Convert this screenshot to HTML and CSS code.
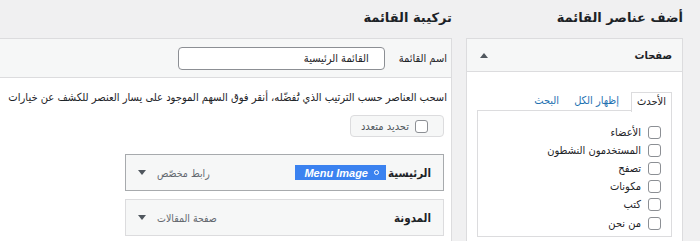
FILE: index.html
```html
<!DOCTYPE html>
<html lang="ar" dir="rtl">
<head>
  <meta charset="UTF-8">
  <title>القوائم</title>
  <link rel="stylesheet" href="styles.css">
</head>
<body>

<div class="wrap">
  <div class="col-side">
    <h2 class="col-title">أضف عناصر القائمة</h2>
    <div class="side-box">
      <div class="side-head">
        <span class="side-name">صفحات</span>
        <span class="arrow-up"></span>
      </div>
      <div class="side-body">
        <ul class="tabs">
          <li class="tab active">الأحدث</li>
          <li class="tab"><a href="#">إظهار الكل</a></li>
          <li class="tab"><a href="#">البحث</a></li>
        </ul>
        <div class="tab-panel">
          <label class="check-row"><span class="check"></span>الأعضاء</label>
          <label class="check-row"><span class="check"></span>المستخدمون النشطون</label>
          <label class="check-row"><span class="check"></span>تصفح</label>
          <label class="check-row"><span class="check"></span>مكونات</label>
          <label class="check-row"><span class="check"></span>كتب</label>
          <label class="check-row"><span class="check"></span>من نحن</label>
        </div>
      </div>
    </div>
  </div>

  <div class="col-main">
    <h2 class="col-title">تركيبة القائمة</h2>
    <div class="main-box">
      <div class="main-head">
        <label class="name-label" for="menu-name">اسم القائمة</label>
        <input id="menu-name" class="name-input" type="text" value="القائمة الرئيسية">
      </div>
      <div class="main-body">
        <p class="hint">اسحب العناصر حسب الترتيب الذي تُفضّله، أنقر فوق السهم الموجود على يسار العنصر للكشف عن خيارات</p>
        <label class="bulk-btn"><span class="check"></span>تحديد متعدد</label>

        <div class="menu-item hovered">
          <span class="item-title">الرئيسية</span>
          <span class="badge"><span class="gear"></span>Menu Image</span>
          <span class="item-type">رابط مخصّص</span>
          <span class="arrow-down"></span>
        </div>
        <div class="menu-item">
          <span class="item-title">المدونة</span>
          <span class="item-type">صفحة المقالات</span>
          <span class="arrow-down"></span>
        </div>
      </div>
    </div>
  </div>
</div>

</body>
</html>
```

FILE: styles.css
```css
html, body {
  margin: 0;
  overflow: hidden;
}
body {
  font-family: "DejaVu Sans Condensed", "DejaVu Sans", sans-serif;
  font-stretch: condensed;
  font-size: 11px;
  color: #1d2327;
  background-color: #f0f0f1;
}
.wrap {
  display: flex;
  gap: 14px;
  padding-right: 17px;
}
.col-side {
  flex: none;
  width: 217px;
}
.col-main {
  flex: none;
  width: 452px;
  overflow: hidden;
}
.col-title {
  margin: 0;
  height: 38px;
  line-height: 36px;
  font-family: "DejaVu Sans", sans-serif;
  font-stretch: normal;
  font-size: 13px;
  font-weight: 600;
}

/* side box */
.side-box {
  background: white;
  border: 1px solid #dcdcde;
  height: 230px;
}
.side-head {
  display: flex;
  align-items: center;
  justify-content: space-between;
  height: 32px;
  padding: 0 10px 0 13px;
  background: #f6f7f7;
  border-bottom: 1px solid #dcdcde;
}
.side-name {
  font-size: 11px;
  font-weight: bold;
}
.arrow-up {
  width: 0;
  height: 0;
  border-left: 4px solid transparent;
  border-right: 4px solid transparent;
  border-bottom: 5px solid #50575e;
}
.side-body {
  padding: 20px 10px 0;
}
.tabs {
  display: flex;
  gap: 9px;
  list-style: none;
  margin: 0;
  padding: 0;
  height: 18px;
}
.tab {
  line-height: 18px;
  padding: 0 3px;
}
.tab a {
  color: #2271b1;
  text-decoration: none;
}
.tab.active {
  background: white;
  border: 1px solid #dcdcde;
  border-bottom: none;
  padding: 0 5px;
  position: relative;
  z-index: 1;
  height: 19px;
}
.tab-panel {
  border: 1px solid #dcdcde;
  height: 113px;
  padding: 12px 10px 0;
}
.check-row {
  display: flex;
  align-items: center;
  gap: 7px;
  height: 18.2px;
  white-space: nowrap;
}
.check {
  flex: none;
  width: 11px;
  height: 11px;
  border: 1px solid #8c8f94;
  border-radius: 3px;
  background: white;
}

/* main box */
.main-box {
  background: white;
  border: 1px solid #dcdcde;
  border-left: none;
  height: 230px;
}
.main-head {
  display: flex;
  align-items: center;
  gap: 14px;
  height: 38px;
  padding-right: 4px;
  background: #f6f7f7;
  border-bottom: 1px solid #dcdcde;
}
.name-input {
  width: 207px;
  height: 23px;
  box-sizing: border-box;
  padding: 0 15px;
  border: 1px solid #8c8f94;
  border-radius: 4px;
  font-family: inherit;
  font-stretch: condensed;
  font-size: 11px;
  color: #1d2327;
  background: white;
}
.main-body {
  padding: 11px 4px 0 0;
}
.hint {
  margin: 0;
  line-height: 18px;
  font-size: 11.1px;
  white-space: nowrap;
}
.bulk-btn {
  display: inline-flex;
  align-items: center;
  gap: 6px;
  margin: 8px 3px 0 0;
  height: 20px;
  padding: 0 15px 0 10px;
  background: #f6f7f7;
  border: 1px solid #dcdcde;
  border-radius: 4px;
  color: #50575e;
}
.menu-item {
  display: flex;
  align-items: center;
  width: 319px;
  height: 37px;
  box-sizing: border-box;
  margin: 0 3px 8px 0;
  padding: 0 12px;
  background: #f6f7f7;
  border: 1px solid #dcdcde;
}
.menu-item:first-of-type {
  margin-top: 17px;
}
.menu-item.hovered {
  border-color: #a7aaad;
}
.item-title {
  font-size: 11.5px;
  font-weight: bold;
}
.badge {
  display: inline-flex;
  align-items: center;
  gap: 6px;
  margin-right: 2px;
  height: 15px;
  padding: 0 7px 0 9px;
  background: #3b82f0;
  color: white;
  font-family: "Liberation Sans", sans-serif;
  font-stretch: normal;
  font-size: 11px;
  font-weight: bold;
  font-style: italic;
}
.gear {
  width: 3px;
  height: 3px;
  border: 1.5px solid white;
  border-radius: 50%;
}
.item-type {
  margin-right: auto;
  color: #646970;
  font-size: 10.5px;
}
.arrow-down {
  margin-right: 11px;
  width: 0;
  height: 0;
  border-left: 4px solid transparent;
  border-right: 4px solid transparent;
  border-top: 5px solid #50575e;
}
```
